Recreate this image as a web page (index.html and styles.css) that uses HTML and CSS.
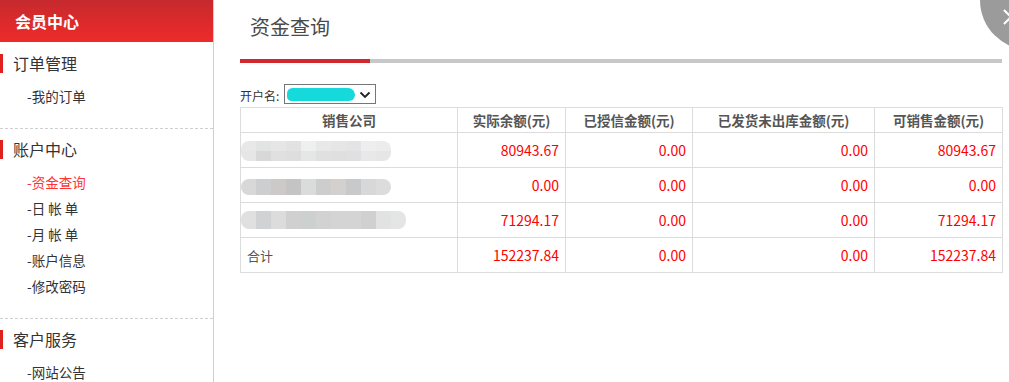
FILE: index.html
```html
<!DOCTYPE html>
<html lang="zh-CN">
<head>
<meta charset="utf-8">
<title>资金查询</title>
<link rel="stylesheet" href="styles.css">
</head>
<body>
<div class="page">
  <aside class="sidebar">
    <div class="side-head">会员中心</div>
    <div class="side-sec first">
      <div class="sec-title">订单管理</div>
      <ul class="sec-items">
        <li>-我的订单</li>
      </ul>
    </div>
    <div class="side-sec">
      <div class="sec-title">账户中心</div>
      <ul class="sec-items">
        <li class="active">-资金查询</li>
        <li>-日&nbsp;帐&nbsp;单</li>
        <li>-月&nbsp;帐&nbsp;单</li>
        <li>-账户信息</li>
        <li>-修改密码</li>
      </ul>
    </div>
    <div class="side-sec">
      <div class="sec-title">客户服务</div>
      <ul class="sec-items">
        <li>-网站公告</li>
      </ul>
    </div>
  </aside>
  <main class="main">
    <h1 class="title">资金查询</h1>
    <div class="tabbar"><span class="tab-on"></span></div>
    <div class="filter">
      <span class="filter-label">开户名:</span>
      <div class="select">
        <span class="select-val"></span>
        <svg class="chev" width="12" height="8" viewBox="0 0 12 8"><path d="M1.5 1.5 L6 6 L10.5 1.5" fill="none" stroke="#222" stroke-width="1.8"/></svg>
      </div>
    </div>
    <table class="grid">
      <colgroup>
        <col class="c1"><col class="c2"><col class="c3"><col class="c4"><col class="c5">
      </colgroup>
      <thead>
        <tr>
          <th>销售公司</th>
          <th>实际余额(元)</th>
          <th>已授信金额(元)</th>
          <th>已发货未出库金额(元)</th>
          <th>可销售金额(元)</th>
        </tr>
      </thead>
      <tbody>
        <tr>
          <td class="name"><span class="blur b1"></span></td>
          <td class="num">80943.67</td>
          <td class="num">0.00</td>
          <td class="num">0.00</td>
          <td class="num">80943.67</td>
        </tr>
        <tr>
          <td class="name"><span class="blur b2"></span></td>
          <td class="num">0.00</td>
          <td class="num">0.00</td>
          <td class="num">0.00</td>
          <td class="num">0.00</td>
        </tr>
        <tr>
          <td class="name"><span class="blur b3"></span></td>
          <td class="num">71294.17</td>
          <td class="num">0.00</td>
          <td class="num">0.00</td>
          <td class="num">71294.17</td>
        </tr>
        <tr>
          <td class="total">合计</td>
          <td class="num">152237.84</td>
          <td class="num">0.00</td>
          <td class="num">0.00</td>
          <td class="num">152237.84</td>
        </tr>
      </tbody>
    </table>
  </main>
  <div class="close-btn"><span class="x x1"></span><span class="x x2"></span></div>
</div>
</body>
</html>
```

FILE: styles.css
```css
* { box-sizing: border-box; }
html, body { margin: 0; padding: 0; }
body {
  font-family: "Noto Sans CJK SC", "Noto Sans", sans-serif;
  color: #333;
  background: #fff;
  overflow: hidden;
}
.page {
  display: flex;
  width: 1009px;
  min-height: 100vh;
  position: relative;
  overflow: hidden;
}
.sidebar {
  width: 214px;
  flex: 0 0 214px;
  border-right: 1px solid #cfcfcf;
}
.side-head {
  height: 42px;
  line-height: 42px;
  padding-left: 15px;
  color: #fff;
  font-size: 16px;
  font-weight: bold;
  background: linear-gradient(to bottom, #c62a2e, #ef2a2a);
}
.side-sec {
  border-top: 1px dashed #cfcfcf;
  padding: 11px 0 19px;
}
.side-sec.first {
  border-top: none;
  padding-top: 12px;
}
.sec-title {
  height: 19px;
  line-height: 19px;
  border-left: 3px solid #e0201f;
  padding-left: 10px;
  font-size: 16px;
  color: #333;
}
.sec-items {
  list-style: none;
  margin: 10px 0 0;
  padding: 0 0 0 27px;
}
.sec-items li {
  height: 26px;
  line-height: 26px;
  font-size: 13.5px;
  color: #333;
  white-space: nowrap;
}
.sec-items li.active { color: #f33; }

.main {
  flex: 0 0 795px;
  width: 795px;
  padding: 0 7px 0 26px;
}
.title {
  margin: 0;
  height: 59px;
  line-height: 54px;
  padding-left: 10px;
  font-size: 20px;
  font-weight: normal;
  color: #4a4a4a;
}
.tabbar {
  width: 762px;
  height: 4px;
  background: #c8c8c8;
  display: flex;
}
.tab-on {
  width: 130px;
  background: #d0282c;
}
.filter {
  margin-top: 21px;
  height: 20px;
  display: flex;
  align-items: center;
  gap: 5px;
}
.filter-label {
  font-size: 12px;
  color: #333;
  padding-top: 2px;
}
.select {
  width: 92px;
  height: 20px;
  border: 1px solid #767676;
  display: flex;
  align-items: center;
  padding: 0 4px 0 2px;
  justify-content: space-between;
}
.select-val {
  width: 68px;
  height: 13px;
  border-radius: 7px 9px 8px 6px;
  background: #16d9dc;
  filter: blur(0.5px);
}
.chev { display: block; margin-top: 1px; }

.grid {
  margin-top: 3px;
  width: 762px;
  table-layout: fixed;
  border-collapse: collapse;
  font-size: 14px;
}
.c1 { width: 217px; }
.c2 { width: 108px; }
.c3 { width: 127px; }
.c4 { width: 182px; }
.c5 { width: 128px; }
.grid th, .grid td {
  border: 1px solid #dcdcdc;
  padding: 0 6px;
  white-space: nowrap;
  overflow: hidden;
}
.grid th {
  height: 25px;
  font-weight: bold;
  color: #555;
  text-align: center;
  font-size: 13.5px;
}
.grid td {
  height: 35px;
  vertical-align: middle;
}
.grid td.num {
  color: #ff0000;
  text-align: right;
  padding-bottom: 1px;
}
.grid td.total {
  color: #555;
  font-size: 13px;
}
.grid td.name {
  padding: 0;
}
.blur {
  display: block;
  border-radius: 8px;
  filter: blur(0.4px);
}
.b1 {
  width: 150px;
  height: 20px;
  margin-top: 1px;
  background:
    linear-gradient(to right, #e8e8e8 0 10%, #e2e4e4 10% 20%, #e6e6e6 20% 30%, #e2e2e2 30% 40%, #eef0ef 40% 50%, #e8e8e8 50% 60%, #e6e6e6 60% 70%, #e4e4e4 70% 80%, #eeeeee 80% 90%, #ececec 90% 100%) top / 100% 50% no-repeat,
    linear-gradient(to right, #e6e6e6 0 10%, #d8d8d8 10% 20%, #e0e0e0 20% 30%, #dedede 30% 40%, #e6e6e6 40% 50%, #e0e0e0 50% 60%, #e0dfdf 60% 70%, #e0e0e2 70% 80%, #e8e8e8 80% 90%, #e6e6e6 90% 100%) bottom / 100% 50% no-repeat;
}
.b2 {
  width: 150px;
  height: 16px;
  margin-top: 3px;
  background: linear-gradient(to right, #d8d8d8 0 10%, #ccced0 10% 20%, #ccc9c8 20% 30%, #c4c4c4 30% 40%, #dadcdc 40% 50%, #cdcdcd 50% 60%, #d4d0ce 60% 70%, #c8c9cb 70% 80%, #d8d8d8 80% 90%, #dcdcdc 90% 100%);
}
.b3 {
  width: 165px;
  height: 18px;
  background: linear-gradient(to right, #e0e0e0 0 9.1%, #d0d2d4 9.1% 18.2%, #dcdcdc 18.2% 27.3%, #d0d0d0 27.3% 36.4%, #ccd0ce 36.4% 45.5%, #d2d2d2 45.5% 54.5%, #d4d4d4 54.5% 63.6%, #d4d4d4 63.6% 72.7%, #d0d0d0 72.7% 81.8%, #e2e2e2 81.8% 90.9%, #e4e6e6 90.9% 100%);
}

.close-btn {
  position: absolute;
  left: 980px;
  top: -50px;
  width: 100px;
  height: 100px;
  border-radius: 50%;
  background: #9b9b9b;
}
.x {
  position: absolute;
  left: 21px;
  top: 66px;
  width: 20px;
  height: 2px;
  background: #fff;
}
.x1 { transform: rotate(45deg); }
.x2 { transform: rotate(-45deg); }
```
